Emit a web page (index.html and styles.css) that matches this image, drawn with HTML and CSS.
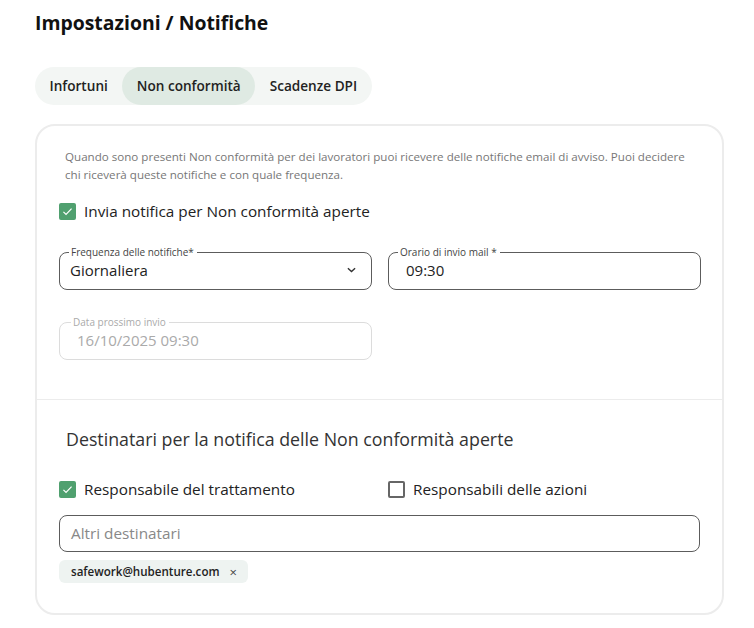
FILE: index.html
```html
<!DOCTYPE html>
<html>
<head>
  <meta charset="utf-8">
  <title>Impostazioni / Notifiche</title>
  <link rel="stylesheet" href="styles.css">
</head>
<body>
  <div class="page">
    <h1>Impostazioni / Notifiche</h1>

    <div class="tabs">
      <a href="#" class="tab">Infortuni</a>
      <a href="#" class="tab active">Non conformità</a>
      <a href="#" class="tab">Scadenze DPI</a>
    </div>

    <div class="card">
      <div class="section">
        <p class="intro">
          Quando sono presenti Non conformità per dei lavoratori puoi ricevere delle notifiche email di avviso. Puoi decidere
          chi riceverà queste notifiche e con quale frequenza.
        </p>

        <label class="check">
          <span class="box checked">
            <svg viewBox="0 0 16 16" width="15" height="15"><path d="M3 8.4l3.2 3.1 6.8-7" fill="none" stroke="#fff" stroke-width="1.5"/></svg>
          </span>
          Invia notifica per Non conformità aperte
        </label>

        <div class="fields">
          <fieldset class="field">
            <legend>Frequenza delle notifiche*</legend>
            <div class="value">
              Giornaliera
              <svg class="caret" viewBox="0 0 10 6" width="9" height="6"><path d="M1 1l4 3.6L9 1" fill="none" stroke="#333" stroke-width="1.6"/></svg>
            </div>
          </fieldset>
          <fieldset class="field">
            <legend>Orario di invio mail *</legend>
            <div class="value time">09:30</div>
          </fieldset>
          <fieldset class="field disabled">
            <legend>Data prossimo invio</legend>
            <div class="value">16/10/2025 09:30</div>
          </fieldset>
        </div>
      </div>

      <div class="section recipients">
        <h2>Destinatari per la notifica delle Non conformità aperte</h2>

        <div class="checks">
          <label class="check">
            <span class="box checked">
              <svg viewBox="0 0 16 16" width="15" height="15"><path d="M3 8.4l3.2 3.1 6.8-7" fill="none" stroke="#fff" stroke-width="1.5"/></svg>
            </span>
            Responsabile del trattamento
          </label>
          <label class="check">
            <span class="box"></span>
            Responsabili delle azioni
          </label>
        </div>

        <div class="input">Altri destinatari</div>

        <div class="chips">
          <span class="chip">safework@hubenture.com <span class="remove">×</span></span>
        </div>
      </div>
    </div>
  </div>
</body>
</html>
```

FILE: styles.css
```css
body {
  margin: 0;
  font-family: "Open Sans", Arial, sans-serif;
  color: #222;
  background: #fff;
}

.page {
  padding: 9px 30px 0 35px;
}

h1 {
  margin: 0 0 31px;
  font-size: 19.4px;
  font-weight: 700;
  color: #111;
}

.tabs {
  display: inline-flex;
  background: #f3f6f4;
  border-radius: 19px;
}

.tab {
  display: block;
  padding: 0 14.5px;
  line-height: 38px;
  font-size: 13.6px;
  font-weight: 600;
  color: #222;
  text-decoration: none;
  border-radius: 19px;
}

.tab.active {
  background: #dfeae3;
}

.card {
  margin-top: 19px;
  width: 685px;
  border: 2px solid #ececec;
  border-radius: 20px;
}

.section {
  padding: 22px 22px 39px;
}

.section + .section {
  border-top: 1px solid #ececec;
}

.intro {
  margin: 0 0 17px 6px;
  font-size: 11.6px;
  line-height: 18px;
  color: #777;
}

.check {
  display: flex;
  align-items: center;
  gap: 8px;
  font-size: 15.3px;
  color: #222;
}

.box {
  display: flex;
  align-items: center;
  justify-content: center;
  box-sizing: border-box;
  width: 17px;
  height: 17px;
  border: 2px solid #666;
  border-radius: 2px;
}

.box.checked {
  background: #50a06f;
  border-color: #50a06f;
}

.fields {
  display: grid;
  grid-template-columns: 313px 313px;
  column-gap: 16px;
  row-gap: 25px;
  margin-top: 24px;
}

.field {
  margin: 0;
  padding: 0 10px;
  height: 45px;
  box-sizing: border-box;
  border: 1px solid #5c5c5c;
  border-radius: 8px;
}

.field legend {
  margin-left: -1px;
  padding: 0 3px 0 2px;
  font-size: 10px;
  color: #444;
}

.field .value {
  display: flex;
  align-items: center;
  justify-content: space-between;
  height: 25px;
  margin-top: -2px;
  font-size: 15px;
  color: #222;
}

.field .value.time {
  padding-left: 7px;
}

.caret {
  margin-right: 5px;
}

.field.disabled {
  border-color: #dcdcdc;
}

.field.disabled legend {
  margin-left: 1px;
  color: #aaa;
}

.field.disabled .value {
  padding-left: 7px;
  color: #aaa;
}

.recipients {
  padding-top: 27px;
  padding-bottom: 30px;
}

.recipients h2 {
  margin: 0 0 28px 7px;
  font-size: 17.8px;
  font-weight: 400;
  color: #333;
}

.checks {
  display: grid;
  grid-template-columns: 329px 313px;
}

.input {
  margin-top: 16px;
  height: 37px;
  box-sizing: border-box;
  border: 1px solid #5c5c5c;
  border-radius: 8px;
  padding: 0 11px;
  line-height: 35px;
  font-size: 15.3px;
  color: #888;
}

.chips {
  margin-top: 7px;
}

.chip {
  display: inline-flex;
  align-items: center;
  gap: 10px;
  height: 23px;
  padding: 0 11px 0 12px;
  background: #eef3f1;
  border-radius: 6px;
  font-size: 11.6px;
  font-weight: 600;
  color: #222;
}

.remove {
  font-size: 13px;
  font-weight: 400;
  color: #444;
}
```
